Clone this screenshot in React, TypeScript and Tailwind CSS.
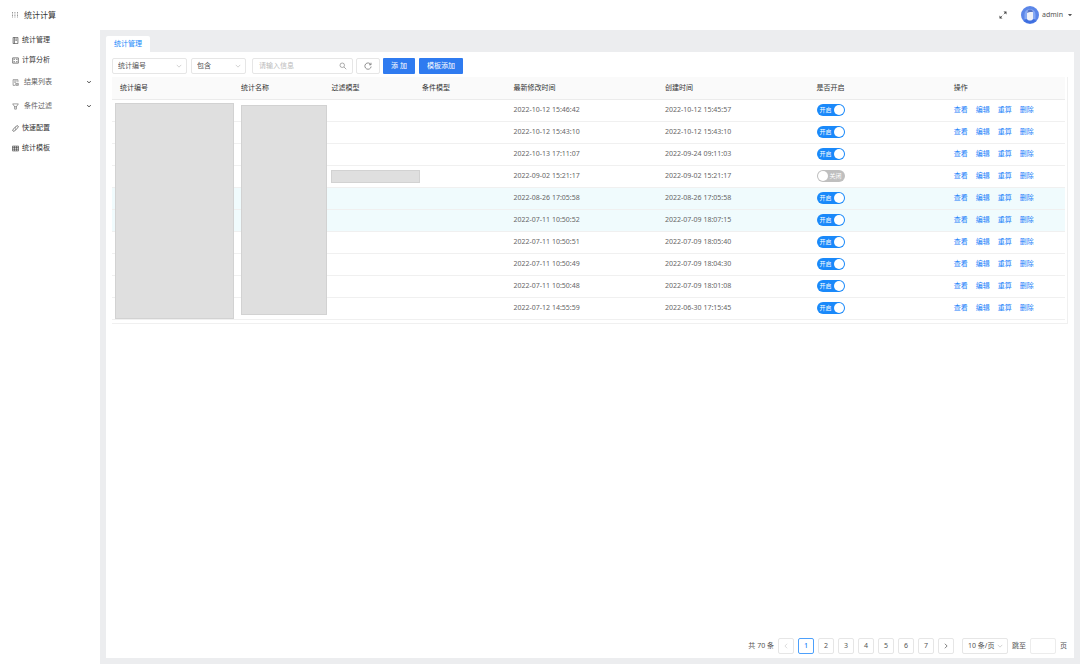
import { useState } from 'react'
import type { ReactNode } from 'react'

interface RecordRow {
  updated: string
  created: string
  enabled: boolean
  highlight?: boolean
  masked?: boolean
}

const records: RecordRow[] = [
  { updated: '2022-10-12 15:46:42', created: '2022-10-12 15:45:57', enabled: true },
  { updated: '2022-10-12 15:43:10', created: '2022-10-12 15:43:10', enabled: true },
  { updated: '2022-10-13 17:11:07', created: '2022-09-24 09:11:03', enabled: true },
  { updated: '2022-09-02 15:21:17', created: '2022-09-02 15:21:17', enabled: false, masked: true },
  { updated: '2022-08-26 17:05:58', created: '2022-08-26 17:05:58', enabled: true, highlight: true },
  { updated: '2022-07-11 10:50:52', created: '2022-07-09 18:07:15', enabled: true, highlight: true },
  { updated: '2022-07-11 10:50:51', created: '2022-07-09 18:05:40', enabled: true },
  { updated: '2022-07-11 10:50:49', created: '2022-07-09 18:04:30', enabled: true },
  { updated: '2022-07-11 10:50:48', created: '2022-07-09 18:01:08', enabled: true },
  { updated: '2022-07-12 14:55:59', created: '2022-06-30 17:15:45', enabled: true },
]

const columns = [
  { title: '统计编号', width: 'w-[12.7%]' },
  { title: '统计名称', width: 'w-[9.5%]' },
  { title: '过滤模型', width: 'w-[9.5%]' },
  { title: '条件模型', width: 'w-[9.6%]' },
  { title: '最新修改时间', width: 'w-[15.9%]' },
  { title: '创建时间', width: 'w-[15.9%]' },
  { title: '是否开启', width: 'w-[14.4%]' },
  { title: '操作', width: 'w-[12.5%]' },
]

const actions = ['查看', '编辑', '重算', '删除']

function Icon({ children, className = 'size-2' }: { children: ReactNode; className?: string }) {
  return (
    <svg
      viewBox="0 0 16 16"
      fill="none"
      stroke="currentColor"
      strokeWidth="1.4"
      aria-hidden="true"
      className={`shrink-0 ${className}`}
    >
      {children}
    </svg>
  )
}

function ChevronDown({ className = 'size-1.5' }: { className?: string }) {
  return (
    <Icon className={className}>
      <path d="M2 5l6 6 6-6" />
    </Icon>
  )
}

const menu = [
  {
    label: '统计管理',
    group: false,
    icon: <path d="M2.5 1h11v14h-11zM5.5 1v14M7.5 4.5h4M7.5 7.5h4" />,
  },
  {
    label: '计算分析',
    group: false,
    icon: <path d="M1.5 2h13v12h-13zM4.5 6.5V5h2M9.5 5h2v1.5M4.5 9.5V11h2M9.5 11h2V9.5" />,
  },
  {
    label: '结果列表',
    group: true,
    icon: <path d="M13.5 7V1.5h-11v13H7M5 4.5h6M5 7.5h4M8.5 10h6v4.5h-6zM10 12.3h3" />,
  },
  { label: '条件过滤', group: true, icon: <path d="M1.5 2h13L10 8.5V14H6V8.5zM5 8.5h6" /> },
  {
    label: '快速配置',
    group: false,
    icon: (
      <path d="M7 5.5l3-3.2a2.5 2.5 0 0 1 3.7 3.6L10.5 9a2.5 2.5 0 0 1-3.6 0M9 10.5l-3 3.2a2.5 2.5 0 0 1-3.7-3.6L5.5 7a2.5 2.5 0 0 1 3.6 0" />
    ),
  },
  { label: '统计模板', group: false, icon: <path d="M1 2.5h14v11H1zM1 6h14M1 9.7h14M5.5 2.5v11M10.5 2.5v11" /> },
]

function Header() {
  return (
    <header className="flex h-[30px] shrink-0 items-center pr-2 pl-3">
      <button type="button" aria-label="菜单" className="text-[#888]">
        <svg viewBox="0 0 12 12" fill="currentColor" className="block size-1.5">
          {[0, 5, 10].map((x) =>
            [0, 3, 6, 9].map((y) => <rect key={`${x}-${y}`} x={x} y={y} width="1.7" height="2" />),
          )}
        </svg>
      </button>
      <h1 className="ml-1.5 text-[8px] text-[#333]">统计计算</h1>
      <button type="button" aria-label="全屏" className="ml-auto text-[#444]">
        <Icon>
          <path d="M9.5 6.5L14 2M6.5 9.5L2 14" />
          <path d="M9 1h6v6zM1 9v6h6z" fill="currentColor" stroke="none" />
        </Icon>
      </button>
      <button type="button" className="ml-3.5 flex items-center text-[#555]">
        <svg viewBox="0 0 36 36" aria-hidden="true" className="size-[18px]">
          <circle cx="18" cy="18" r="18" fill="#5b86e8" />
          <path d="M6 30a18 18 0 0 0 24 0c-3-4-7-4-12-4s-9 0-12 4z" fill="#3f6fe0" />
          <path d="M7 17a11 11 0 0 1 22 0v9H7z" fill="#86a9f3" />
          <path d="M12 14c0-4 3-5 6-5s6 1 6 5v11c0 3-3 4-6 4s-6-1-6-4z" fill="#eef1f8" />
          <path d="M12 14c1-5 3-7 6-7s5 2 6 5c-4 0-7-1-12 2z" fill="#5674c4" />
        </svg>
        <span className="ml-[3px]">admin</span>
        <svg viewBox="0 0 10 6" fill="currentColor" aria-hidden="true" className="ml-[5px] w-1">
          <path d="M0 0h10L5 6z" />
        </svg>
      </button>
    </header>
  )
}

function Sidebar() {
  return (
    <nav className="w-[100px] shrink-0">
      <ul>
        {menu.map((item) => (
          <li key={item.label}>
            {item.group ? (
              <button
                type="button"
                aria-expanded="false"
                className="flex h-6 w-full items-center gap-[5px] pr-2 pl-3 text-[#666]"
              >
                <Icon className="size-[7px]">{item.icon}</Icon>
                <span>{item.label}</span>
                <Icon className="ml-auto size-1.5 text-[#444]">
                  <path d="M3 6l5 4 5-4" strokeWidth="2.4" />
                </Icon>
              </button>
            ) : (
              <a href="#" className="flex h-5 items-center gap-[3px] px-3 text-[#333]">
                <Icon className="size-[7px]">{item.icon}</Icon>
                <span>{item.label}</span>
              </a>
            )}
          </li>
        ))}
      </ul>
    </nav>
  )
}

function Select({ label, value, className }: { label: string; value: string; className: string }) {
  return (
    <div className={`relative ${className}`}>
      <select
        aria-label={label}
        className="block h-4 w-full appearance-none rounded-xs border border-[#e6e6e6] bg-white pl-[5px] text-[#555]"
      >
        <option>{value}</option>
      </select>
      <ChevronDown className="pointer-events-none absolute top-[5px] right-[5px] size-1.5 text-[#aaa]" />
    </div>
  )
}

function Toolbar() {
  return (
    <form className="mb-px flex h-5 items-center" onSubmit={(e) => e.preventDefault()}>
      <Select label="查询字段" value="统计编号" className="w-[75px]" />
      <Select label="匹配方式" value="包含" className="ml-1 w-[55px]" />
      <div className="relative ml-1.5 w-[101px]">
        <input
          type="text"
          aria-label="查询内容"
          placeholder="请输入信息"
          className="block h-4 w-full rounded-xs border border-[#e6e6e6] px-1.5 pb-px placeholder:text-[#bbb]"
        />
        <Icon className="pointer-events-none absolute top-1 right-1.5 size-2 text-[#888]">
          <circle cx="6.5" cy="6.5" r="4.5" />
          <path d="M10 10l4.5 4.5" />
        </Icon>
      </div>
      <button
        type="button"
        aria-label="刷新"
        className="ml-[3px] flex h-4 w-6 items-center justify-center rounded-xs border border-[#e6e6e6] text-[#666]"
      >
        <Icon>
          <path d="M13.5 5A6.3 6.3 0 1 0 14.3 9M14 1.5V5.5h-4" />
        </Icon>
      </button>
      <button type="submit" className="ml-[3px] h-4 w-8 rounded-[1px] bg-[#2f7bf0] text-white">
        添 加
      </button>
      <button type="button" className="ml-1 h-4 w-11 rounded-[1px] bg-[#2f7bf0] text-white">
        模板添加
      </button>
    </form>
  )
}

function Switch({ checked, onChange }: { checked: boolean; onChange: () => void }) {
  return (
    <button
      type="button"
      role="switch"
      aria-checked={checked}
      aria-label="是否开启"
      onClick={onChange}
      className={`flex h-3 w-7 items-center justify-between rounded-full px-px text-[6px] text-white ${
        checked ? 'bg-[#1a89fa]' : 'flex-row-reverse bg-[#bfbfbf]'
      }`}
    >
      <span className="px-0.5">{checked ? '开启' : '关闭'}</span>
      <span className="size-2.5 rounded-full bg-white" />
    </button>
  )
}

function RecordTable() {
  const [enabled, setEnabled] = useState(records.map((r) => r.enabled))

  const toggle = (index: number) => setEnabled(enabled.map((on, i) => (i === index ? !on : on)))

  return (
    <div className="relative border-r border-b border-[#f0f0f0] pr-0.5 pb-[3px]">
      <table className="w-full table-fixed border-collapse text-left">
        <thead>
          <tr className="h-[22px] border-b border-[#ebebeb] bg-[#fafafa]">
            {columns.map((col) => (
              <th key={col.title} className={`p-0 pl-2 font-normal text-[#333] ${col.width}`}>
                {col.title}
              </th>
            ))}
          </tr>
        </thead>
        <tbody>
          {records.map((row, i) => (
            <tr
              key={row.created}
              className={`h-[22px] border-b border-[#f0f0f0] ${row.highlight ? 'bg-[#f0fbfd]' : ''}`}
            >
              <td />
              <td />
              <td className="p-0 pl-[7px]">
                {row.masked && <div className="h-[13px] w-[calc(100%+6px)] border border-[#d2d2d2] bg-[#dfdfdf]" />}
              </td>
              <td />
              <td className="p-0 pl-2">{row.updated}</td>
              <td className="p-0 pl-2">{row.created}</td>
              <td className="p-0 pl-2">
                <Switch checked={enabled[i]} onChange={() => toggle(i)} />
              </td>
              <td className="p-0 pl-2">
                <div className="flex gap-2 text-[#1a7ffa]">
                  {actions.map((action) => (
                    <a key={action} href="#">
                      {action}
                    </a>
                  ))}
                </div>
              </td>
            </tr>
          ))}
        </tbody>
      </table>
      {/* masks over the id and name columns */}
      <div className="absolute top-[26px] bottom-1 left-[3px] w-[12.5%] border border-[#d2d2d2] bg-[#dfdfdf]" />
      <div className="absolute top-7 bottom-2 left-[13.5%] w-[9%] border border-[#d2d2d2] bg-[#dfdfdf]" />
    </div>
  )
}

function PageButton({ children, active = false, label }: { children: ReactNode; active?: boolean; label?: string }) {
  return (
    <button
      type="button"
      aria-label={label}
      aria-current={active ? 'page' : undefined}
      className={`flex size-4 items-center justify-center rounded-xs border ${
        active ? 'border-[#4da0fb] font-medium text-[#1a7ffa]' : 'border-[#e6e6e6]'
      }`}
    >
      {children}
    </button>
  )
}

function Pagination() {
  return (
    <div className="mt-auto flex items-center justify-end gap-1 pr-px text-[#555]">
      <span>共 70 条</span>
      <PageButton label="上一页">
        <Icon className="size-1.5 text-[#bbb]">
          <path d="M11 2L5 8l6 6" />
        </Icon>
      </PageButton>
      {[1, 2, 3, 4, 5, 6, 7].map((page) => (
        <PageButton key={page} active={page === 1}>
          {page}
        </PageButton>
      ))}
      <PageButton label="下一页">
        <Icon className="size-1.5">
          <path d="M5 2l6 6-6 6" strokeWidth="2" />
        </Icon>
      </PageButton>
      <Select label="每页条数" value="10 条/页" className="ml-1 w-[46px]" />
      <label className="flex items-center gap-1">
        跳至
        <input type="text" className="h-4 w-[26px] rounded-xs border border-[#ececec] px-1" />
        页
      </label>
    </div>
  )
}

export default function App() {
  return (
    <div className="flex min-h-screen flex-col bg-white font-['Noto_Sans','Noto_Sans_CJK_SC',sans-serif] text-[7px] leading-[10px] text-[#666]">
      <Header />
      <div className="flex flex-1">
        <Sidebar />
        <main className="flex min-w-0 flex-1 flex-col bg-[#ecedef] p-1.5">
          <div role="tablist" className="flex">
            <button
              type="button"
              role="tab"
              aria-selected="true"
              className="h-4 rounded-t-xs bg-white px-2 text-[#1a89fa]"
            >
              统计管理
            </button>
          </div>
          <section className="flex flex-1 flex-col bg-white px-1.5 pt-1 pb-1">
            <Toolbar />
            <RecordTable />
            <Pagination />
          </section>
        </main>
      </div>
    </div>
  )
}
